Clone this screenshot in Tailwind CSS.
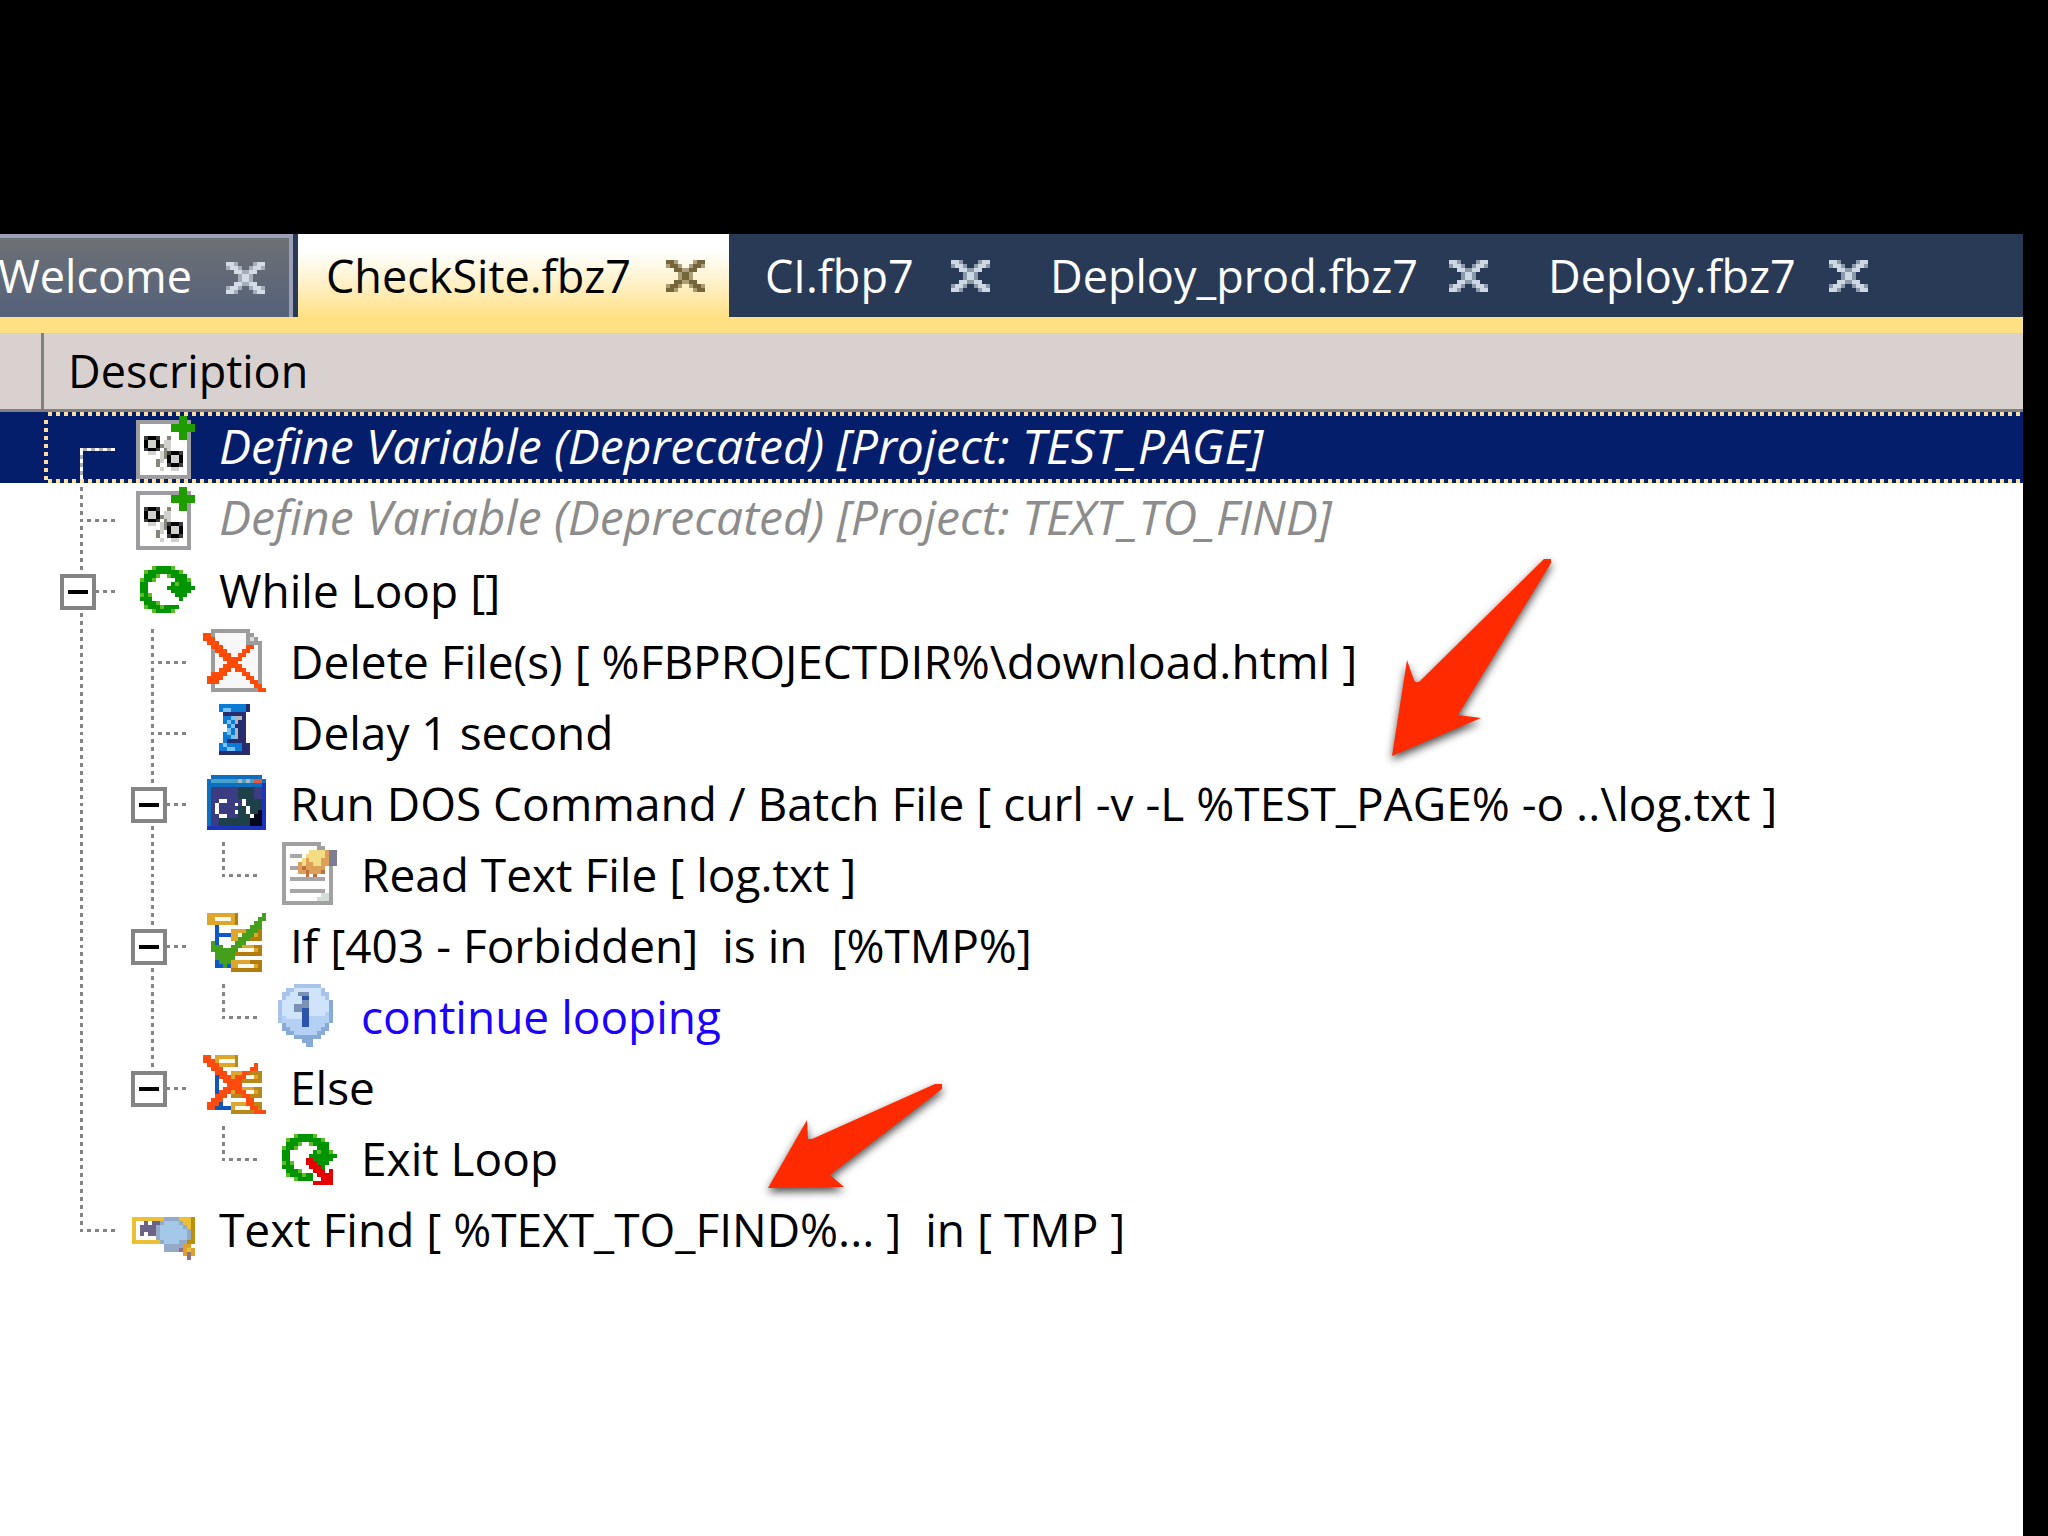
<!DOCTYPE html>
<html lang="en">
<head>
    <meta charset="UTF-8">
    <meta name="viewport" content="width=device-width, initial-scale=1.0">
    <title>CheckSite.fbz7</title>
    <script src="https://cdn.jsdelivr.net/npm/@tailwindcss/browser@4"></script>
</head>
<body class="bg-black min-h-screen flex flex-col pt-[234px] pr-[25px] overflow-x-hidden font-['Open_Sans','Noto_Sans',sans-serif] text-[45px] leading-[60px] text-black">

    <!-- Document tabs -->
    <div role="tablist" class="flex h-[83px] bg-[#293a57] text-white whitespace-nowrap">
        <div role="tab" class="flex items-center justify-end w-[293px] mr-[5px] pr-6 gap-[34px] shrink-0 overflow-hidden border-t-4 border-r-4 border-[#9ba0b8] bg-linear-to-b from-[#6d7175] to-[#55617a]">
            <span class="pb-1">Welcome</span>
            <button aria-label="Close Welcome" class="text-[#d3dbe6]"><svg data-icon="close" class="w-[39px] h-8"></svg></button>
        </div>
        <div role="tab" aria-selected="true" class="flex items-center justify-between w-[431px] pl-7 pr-6 shrink-0 text-black bg-linear-to-b from-white from-20% via-[#fff3cf] via-55% to-[#ffe082]">
            <span>CheckSite.fbz7</span>
            <button aria-label="Close CheckSite.fbz7" class="text-[#75653a]"><svg data-icon="close" class="w-[39px] h-8"></svg></button>
        </div>
        <div role="tab" class="flex items-center justify-between w-[285px] pl-9 pr-6 shrink-0">
            <span>CI.fbp7</span>
            <button aria-label="Close CI.fbp7" class="text-[#ced8e2]"><svg data-icon="close" class="w-[39px] h-8"></svg></button>
        </div>
        <div role="tab" class="flex items-center justify-between w-[498px] pl-9 pr-6 shrink-0">
            <span>Deploy_prod.fbz7</span>
            <button aria-label="Close Deploy_prod.fbz7" class="text-[#ced8e2]"><svg data-icon="close" class="w-[39px] h-8"></svg></button>
        </div>
        <div role="tab" class="flex items-center justify-between w-[380px] pl-9 pr-6 shrink-0">
            <span>Deploy.fbz7</span>
            <button aria-label="Close Deploy.fbz7" class="text-[#ced8e2]"><svg data-icon="close" class="w-[39px] h-8"></svg></button>
        </div>
    </div>
    <div class="h-4 bg-[#ffe082]"></div>

    <!-- Column header -->
    <div class="flex h-[79px] bg-[#d9d1cf] border-b-3 border-[#808080]">
        <div class="w-11 border-r-3 border-[#808080]"></div>
        <div class="flex items-center pl-6">Description</div>
    </div>

    <!-- Action tree -->
    <main class="relative flex-1 bg-white overflow-hidden">
        <ul role="tree" class="whitespace-nowrap text-[46px]">
            <li role="treeitem" aria-selected="true" class="relative flex items-center h-[71px] pl-11 bg-[#051e6b] text-white text-[48px] italic">
                <svg class="size-[71px] shrink-0" viewBox="0 0 18 18" shape-rendering="crispEdges" fill="none">
                    <path d="M9.5 18V9.5H18" stroke="#a9acb4"/>
                    <path d="M9.5 17V9M9 9.5h9" stroke="#fff" stroke-dasharray="1 1"/>
                </svg>
                <svg data-icon="variable" class="size-[63px] ml-[17px] mr-6 shrink-0"></svg>
                <span class="pb-1">Define Variable (Deprecated) [Project: TEST_PAGE]</span>
                <svg class="absolute inset-y-0 left-11 right-0 w-full h-full" shape-rendering="crispEdges" stroke="#fbdf9a" stroke-width="4" stroke-dasharray="4 4">
                    <line x1="4" y1="2" x2="100%" y2="2"/>
                    <line x1="2" y1="8" x2="2" y2="68"/>
                    <line x1="4" y1="69" x2="100%" y2="69"/>
                </svg>
            </li>
            <li role="treeitem" class="flex items-center h-[71px] pl-11 text-[#8c8c8c] text-[48px] italic">
                <svg data-tree="tee" class="size-[71px] shrink-0"></svg>
                <svg data-icon="variable" class="size-[63px] ml-[17px] mr-6 shrink-0"></svg>
                <span class="pb-1">Define Variable (Deprecated) [Project: TEXT_TO_FIND]</span>
            </li>
            <li role="treeitem" aria-expanded="true" class="flex items-center h-[71px] pl-11">
                <div class="relative size-[71px] shrink-0">
                    <svg data-tree="node" class="size-[71px]"></svg>
                    <button aria-label="Collapse" class="absolute left-4 top-5 size-9 border-4 border-[#848484] bg-white flex items-center justify-center"><span class="w-5 h-1 bg-black"></span></button>
                </div>
                <svg data-icon="loop" class="size-[63px] ml-[17px] mr-6 shrink-0"></svg>
                <span>While Loop []</span>
            </li>
            <li role="treeitem" class="flex items-center h-[71px] pl-11">
                <svg data-tree="line" class="size-[71px] shrink-0"></svg>
                <svg data-tree="tee" class="size-[71px] shrink-0"></svg>
                <svg data-icon="deleteFile" class="size-[63px] ml-[17px] mr-6 shrink-0"></svg>
                <span>Delete File(s) [ %FBPROJECTDIR%\download.html ]</span>
            </li>
            <li role="treeitem" class="flex items-center h-[71px] pl-11">
                <svg data-tree="line" class="size-[71px] shrink-0"></svg>
                <svg data-tree="tee" class="size-[71px] shrink-0"></svg>
                <svg data-icon="delay" class="size-[63px] ml-[17px] mr-6 shrink-0"></svg>
                <span>Delay 1 second</span>
            </li>
            <li role="treeitem" aria-expanded="true" class="flex items-center h-[71px] pl-11">
                <svg data-tree="line" class="size-[71px] shrink-0"></svg>
                <div class="relative size-[71px] shrink-0">
                    <svg data-tree="node" class="size-[71px]"></svg>
                    <button aria-label="Collapse" class="absolute left-4 top-5 size-9 border-4 border-[#848484] bg-white flex items-center justify-center"><span class="w-5 h-1 bg-black"></span></button>
                </div>
                <svg data-icon="dos" class="size-[63px] ml-[17px] mr-6 shrink-0"></svg>
                <span>Run DOS Command / Batch File [ curl -v -L %TEST_PAGE% -o ..\log.txt ]</span>
            </li>
            <li role="treeitem" class="flex items-center h-[71px] pl-11">
                <svg data-tree="line" class="size-[71px] shrink-0"></svg>
                <svg data-tree="line" class="size-[71px] shrink-0"></svg>
                <svg data-tree="end" class="size-[71px] shrink-0"></svg>
                <svg data-icon="readText" class="size-[63px] ml-[17px] mr-6 shrink-0"></svg>
                <span>Read Text File [ log.txt ]</span>
            </li>
            <li role="treeitem" aria-expanded="true" class="flex items-center h-[71px] pl-11">
                <svg data-tree="line" class="size-[71px] shrink-0"></svg>
                <div class="relative size-[71px] shrink-0">
                    <svg data-tree="node" class="size-[71px]"></svg>
                    <button aria-label="Collapse" class="absolute left-4 top-5 size-9 border-4 border-[#848484] bg-white flex items-center justify-center"><span class="w-5 h-1 bg-black"></span></button>
                </div>
                <svg data-icon="ifTrue" class="size-[63px] ml-[17px] mr-6 shrink-0"></svg>
                <span class="whitespace-pre">If [403 - Forbidden]  is in  [%TMP%]</span>
            </li>
            <li role="treeitem" class="flex items-center h-[71px] pl-11">
                <svg data-tree="line" class="size-[71px] shrink-0"></svg>
                <svg data-tree="line" class="size-[71px] shrink-0"></svg>
                <svg data-tree="end" class="size-[71px] shrink-0"></svg>
                <svg data-icon="info" class="size-[63px] ml-[17px] mr-6 shrink-0"></svg>
                <span class="text-[#1a00ff]">continue looping</span>
            </li>
            <li role="treeitem" aria-expanded="true" class="flex items-center h-[71px] pl-11">
                <svg data-tree="line" class="size-[71px] shrink-0"></svg>
                <div class="relative size-[71px] shrink-0">
                    <svg data-tree="lastNode" class="size-[71px]"></svg>
                    <button aria-label="Collapse" class="absolute left-4 top-5 size-9 border-4 border-[#848484] bg-white flex items-center justify-center"><span class="w-5 h-1 bg-black"></span></button>
                </div>
                <svg data-icon="ifElse" class="size-[63px] ml-[17px] mr-6 shrink-0"></svg>
                <span>Else</span>
            </li>
            <li role="treeitem" class="flex items-center h-[71px] pl-11">
                <svg data-tree="line" class="size-[71px] shrink-0"></svg>
                <div class="size-[71px] shrink-0"></div>
                <svg data-tree="end" class="size-[71px] shrink-0"></svg>
                <svg data-icon="exitLoop" class="size-[63px] ml-[17px] mr-6 shrink-0"></svg>
                <span>Exit Loop</span>
            </li>
            <li role="treeitem" class="flex items-center h-[71px] pl-11">
                <svg data-tree="end" class="size-[71px] shrink-0"></svg>
                <svg data-icon="textFind" class="size-[63px] ml-[17px] mr-6 shrink-0"></svg>
                <span class="whitespace-pre">Text Find [ %TEXT_TO_FIND%... ]  in [ TMP ]</span>
            </li>
        </ul>

        <!-- Callout arrows -->
        <svg class="absolute left-[1350px] top-[118px] w-60 h-65 drop-shadow-[0_4px_4px_rgba(0,0,0,0.7)]" viewBox="0 0 240 260" fill="#ff2a00">
            <path d="M201 29h-7L70 151q-4 3-6-1l-7-20-15 96 89-38-23-3 93-152z"/>
        </svg>
        <svg class="absolute left-[740px] top-[648px] w-60 h-40 drop-shadow-[0_4px_4px_rgba(0,0,0,0.7)]" viewBox="0 0 240 160" fill="#ff2a00">
            <path d="M202 24h-7L72 79h-4l-1-19-39 68 76-1-14-12 112-86z"/>
        </svg>
    </main>

    <script>
        // Dotted connector lines, on an 18 x 18 grid
        const tree = {
            line: 'M9.5 1V18',
            tee: 'M9.5 1V18M11 9.5H18',
            end: 'M9.5 1V10M11 9.5H18',
            node: 'M9.5 1V5M9.5 15V18M13 9.5H18',
            lastNode: 'M9.5 1V5M13 9.5H18'
        };

        // Icons as pixel rows, one palette per icon
        const icons = {
            close: {
                colors: { x: 'currentColor', s: 'color-mix(in srgb, currentColor 60%, transparent)' },
                rows: [
                    'xxs....sxx',
                    'sxxs..sxxs',
                    '..xxssxx..',
                    '...sxxs...',
                    '...sxxs...',
                    '..xxssxx..',
                    'sxxs..sxxs',
                    'xxs....sxx'
                ]
            },
            variable: {
                colors: { g: '#9d9da1', w: '#fff', k: '#000', c: '#3c3c3c', l: '#d0d0cc', d: '#85857a', G: '#1f9c00' },
                rows: [
                    '............GG..',
                    '.gggggggggggGGg.',
                    '.gwwwwwwwwGGGGGG',
                    '.gwwwwwwwwGGGGGG',
                    '.gwwwwwwwwwwGGg.',
                    '.gwckkcwwdwwGGg.',
                    '.gwkllkwllwwwwg.',
                    '.gwkllkdllwwwwg.',
                    '.gwckkcwdlwwwwg.',
                    '.gwwllwldckkcwg.',
                    '.gwwwwwldkllkwg.',
                    '.gwwwwdlwkllkwg.',
                    '.gwwwwdwwckkcwg.',
                    '.gwwwwwlwwllwwg.',
                    '.gwwwwwwwwwwwwg.',
                    '.gggggggggggggg.'
                ]
            },
            loop: {
                colors: { G: '#009400', g: '#5cbc28' },
                rows: [
                    '................',
                    '................',
                    '.....gGGGGg.....',
                    '...gGGGGGGGGg...',
                    '...GGGg..gGGGG..',
                    '..gGGg.....GGGg.',
                    '..GG......GgGGG.',
                    '..GG.....GGGGGGG',
                    '..GG......GGGGG.',
                    '..gGg......GGG..',
                    '..GGG.......G...',
                    '...GGGg.........',
                    '...gGGGgGGGG....',
                    '.....gGGGGg.....',
                    '................',
                    '................'
                ]
            },
            exitLoop: {
                colors: { G: '#009400', g: '#5cbc28', R: '#e60000' },
                rows: [
                    '................',
                    '................',
                    '.....gGGGGg.....',
                    '...gGGGGGGGGg...',
                    '...GGGg..gGGGG..',
                    '..gGGg.....GGG..',
                    '..GG......GgGGg.',
                    '..GG.....GGGGGGG',
                    '..GG....RRGGGGG.',
                    '..gGg...RRRGGG..',
                    '..GGG....RRRG...',
                    '...GGGg...RRR.R.',
                    '...gGGGgGG.RRRR.',
                    '.....gGGGG..RRR.',
                    '..........RRRRR.',
                    '................'
                ]
            },
            deleteFile: {
                colors: { g: '#9c9c9c', w: '#f7f7f7', l: '#dcdcdc', R: '#ff4a08' },
                rows: [
                    '..gggggggggg....',
                    'RRgwwwwwwwwgg...',
                    'RRRwwwwwwwwglg..',
                    '.RRRwwwwwwwgggg.',
                    '..RRRwwwwwwRRwg.',
                    '..gRRRwwwwRRwwg.',
                    '..gwRRRwwRRwwwg.',
                    '..gwwRRRRRwwwwg.',
                    '..gwwwRRRwwwwwg.',
                    '..gwwRRRRRwwwwg.',
                    '..gwRRRwRRRwwwg.',
                    '..RRRRwwwwRRwwg.',
                    '.RRRRwwwwwwRRwg.',
                    '.RRRwwwwwwwwRRg.',
                    '..gwwwwwwwwwwRR.',
                    '..ggggggggggggRR'
                ]
            },
            delay: {
                colors: { b: '#0d7ad6', B: '#262c6c', c: '#74c4fa', s: '#b4b4bc' },
                rows: [
                    '................',
                    '....bbbbbbbB....',
                    '....bccbbbbB....',
                    '.....BBBBBB.....',
                    '.....bbcssB.....',
                    '.....bcbsBB.....',
                    '......bcBBB.....',
                    '......cbsBB.....',
                    '.....bcbsBB.....',
                    '.....bbcsBB.....',
                    '.....bBBBBB.....',
                    '....bcbbbbBB....',
                    '....bbccbbBB....',
                    '....BBBBBBBB....',
                    '................',
                    '................'
                ]
            },
            dos: {
                colors: { b: '#0e6fbe', t: '#45a0cc', s: '#a8b8bc', R: '#e8583c', p: '#3c3c82', q: '#1e4048', k: '#06081c', B: '#1c34bc', w: '#fff' },
                rows: [
                    '................',
                    '..bbbbbbbbbbbbb.',
                    '.btttttttststRRb',
                    '.bbbbbbbbbbbbbbB',
                    '.bpppppppqqqqppB',
                    '.bpppppppqqqqppB',
                    '.bpppppppqqqqppB',
                    '.bppwwppppwqqqqB',
                    '.bpwppppwpwqqqqB',
                    '.bpwpppppqqwqqqB',
                    '.bpwppppwqqwqqkB',
                    '.bppwwpppqqqwkkB',
                    '.bppqqqqqqqqkkkB',
                    '.bppqqqqqqqqkkkB',
                    '.BBBBBBBBBBBBBBB',
                    '................'
                ]
            },
            readText: {
                colors: { g: '#a2a0a0', w: '#fff', l: '#a8a6a6', y: '#f2dc84', o: '#dca058', r: '#c0703c', n: '#7c7c92', m: '#d0e0d4' },
                rows: [
                    '..gggggggggg....',
                    '..gwwwwwwwwgg...',
                    '..gwwwwwwyyyyonn',
                    '..gwlllwyyyyyonn',
                    '..gwwwwyoyyyoonn',
                    '..gwwwoyooyyoonn',
                    '..gwllorooooowg.',
                    '..gwwwoorooorwg.',
                    '..gwwwwwrwrwwwg.',
                    '..gwlllllllllwg.',
                    '..gwwwwwwwwwwwg.',
                    '..gwwwwwwwwwwwg.',
                    '..gwlllllllllwg.',
                    '..gwwwwwwwwwmmg.',
                    '..gwwwwwwwwmmmg.',
                    '..ggggggggggggg.'
                ]
            },
            ifTrue: {
                colors: { o: '#dea62c', O: '#b47c0c', w: '#fffbe8', b: '#1058c8', v: '#44a01c' },
                rows: [
                    '.oooooooO......v',
                    '.oowwwwoO.....vv',
                    '.oooooooO....vv.',
                    '...b........vvv.',
                    '...b...oooovvvO.',
                    '...bbbboowvvvoO.',
                    '...b...oovvvOOO.',
                    '..vb....vvv.....',
                    '..vvv..vvvoooOO.',
                    '..vvvvvvvwwwwoO.',
                    '...vvvvvOOOOOOO.',
                    '...vvvvv........',
                    '...bvvvoooooOOO.',
                    '...bbvboowwwwoO.',
                    '.......OOOOOOOO.',
                    '................'
                ]
            },
            ifElse: {
                colors: { o: '#dea62c', O: '#b88818', w: '#fffbe8', b: '#1058b8', R: '#ff4a10' },
                rows: [
                    'RR.oooooO.......',
                    'RRRowwwwO.......',
                    '.RRRooooO....R..',
                    '..RRR.......RR..',
                    '...RRR.oooRROOO.',
                    '...bRRRoRRRwwoO.',
                    '...b.RRRRROOOOO.',
                    '...b..RRRR......',
                    '...b.RRRRRoooOO.',
                    '...bRRRoRRRwwoO.',
                    '...RRR.OOORROOO.',
                    '..RRR......RR...',
                    '.RRRb..ooooRROO.',
                    '.RRbbbbowwwwRRO.',
                    '.......OOOOOORRR',
                    '................'
                ]
            },
            info: {
                colors: { a: '#a8c4ea', c: '#cfe4fb', e: '#b4d0f4', d: '#88aad8', s: '#7c90b4', i: '#2c54ac' },
                rows: [
                    '.....aaaaaaa....',
                    '...aaccccccca...',
                    '..aaccssscccaa..',
                    '..acccciicccca..',
                    '.acccccsscccccd.',
                    '.acccsssscccccd.',
                    '.acccssiicccccd.',
                    '.accccciicccced.',
                    '.aecccciieeeeed.',
                    '.aeeeeeiieeeeed.',
                    '..deeeeiieeeed..',
                    '..ddeeeeeeeedd..',
                    '...ddeeeeeedd...',
                    '.....ddddddd....',
                    '.......ddd......',
                    '........dd......'
                ]
            },
            textFind: {
                colors: { y: '#ecc034', Y: '#b8900c', w: '#fff', m: '#6c6488', c: '#a4c8e8', e: '#94a8c8', o: '#e0a030', p: '#94707c' },
                rows: [
                    '................',
                    '................',
                    '................',
                    '................',
                    '................',
                    'yyyyyyyyeeeeyyyY',
                    'ywwmwmmecccceyyY',
                    'ywmmmmecccccceyY',
                    'ywmmmmeccccccceY',
                    'ywmwmmeccccccceY',
                    'ywwwwweccccccceY',
                    'yyyyyyyecccceeYY',
                    '........eeeeeoo.',
                    '........eeeepoyo',
                    '.............opo',
                    '..............p.'
                ]
            }
        };

        document.querySelectorAll('[data-tree]').forEach(svg => {
            svg.setAttribute('viewBox', '0 0 18 18');
            svg.setAttribute('shape-rendering', 'crispEdges');
            svg.innerHTML = `<path d="${tree[svg.dataset.tree]}" fill="none" stroke="#848484" stroke-dasharray="1 1"/>`;
        });

        document.querySelectorAll('[data-icon]').forEach(svg => {
            const { colors, rows } = icons[svg.dataset.icon];
            svg.setAttribute('viewBox', `0 0 ${rows[0].length} ${rows.length}`);
            svg.setAttribute('preserveAspectRatio', 'none');
            svg.setAttribute('shape-rendering', 'crispEdges');
            const paths = {};
            rows.forEach((row, y) => [...row].forEach((key, x) => {
                if (colors[key]) paths[key] = (paths[key] || '') + `M${x} ${y}h1v1h-1z`;
            }));
            svg.innerHTML = Object.entries(paths).map(([key, d]) => `<path d="${d}" fill="${colors[key]}"/>`).join('');
        });
    </script>
</body>
</html>
